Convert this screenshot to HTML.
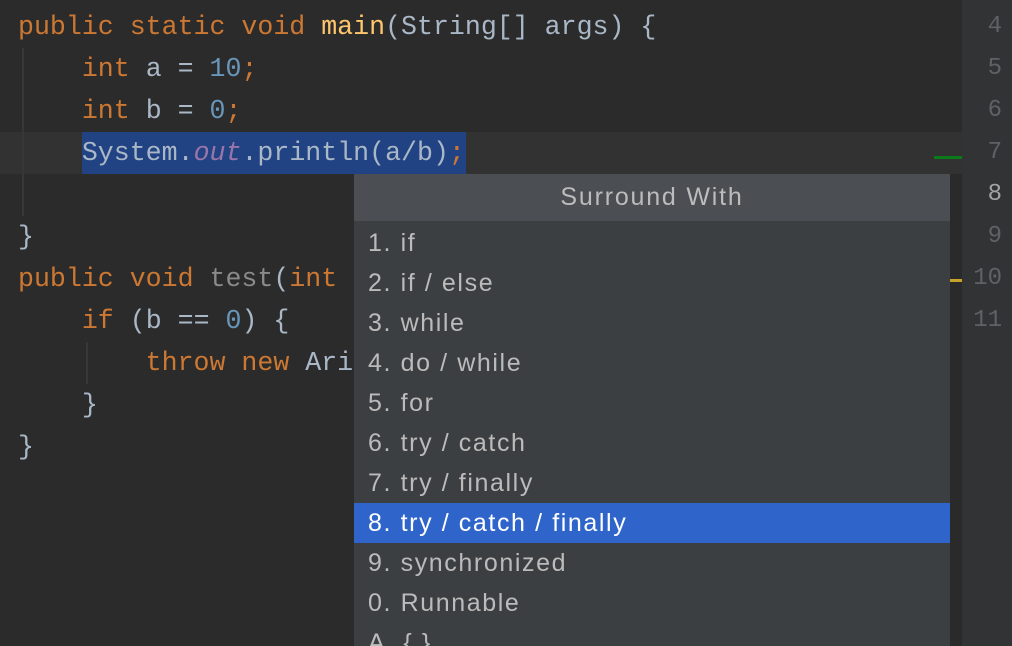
<!DOCTYPE html>
<html style="margin:0;width:1012px;height:646px;overflow:hidden"><head><style>
body{margin:0;width:1012px;height:646px;overflow:hidden;background:#2b2b2b;position:relative;font-family:"Liberation Mono",monospace}
.cur{position:absolute;left:0;top:132px;width:962px;height:42px;background:#323232}
.sel{position:absolute;left:82px;top:132px;width:384px;height:42px;background:#214283}
.gut{position:absolute;left:962px;top:0;width:50px;height:646px;background:#313335}
.ln{position:absolute;right:10px;width:40px;text-align:right;font-size:24px;color:#5f6265;line-height:42px}
.code{position:absolute;left:18px;font-size:26.6px;line-height:42px;color:#a9b7c6;white-space:pre}
.k{color:#cc7832}.n{color:#6897bb}.f{color:#ffc66d}.o{color:#9876aa;font-style:italic}.g{color:#8a8a8a}
.guide{position:absolute;width:2px;background:#373737}
.pop{position:absolute;left:354px;top:174px;width:596px;height:472px;overflow:hidden;background:#3c3f41;font-family:"Liberation Sans",sans-serif}
.hd{height:47px;background:#4b4e52;color:#bcbcbc;font-size:25px;letter-spacing:1.8px;line-height:47px;text-align:center}
.it{height:40px;line-height:40px;padding-left:14px;font-size:25px;letter-spacing:1.6px;color:#bbbbbb}
.it.s{background:#2f65ca;color:#fff}
</style></head><body>
<div class="cur"></div>
<div class="sel"></div>
<div class="guide" style="left:22px;top:48px;height:168px"></div>
<div class="guide" style="left:86px;top:342px;height:42px"></div>
<div class="code" style="top:6px"><span class="k">public static void </span><span class="f">main</span>(String[] args) {</div>
<div class="code" style="top:48px">    <span class="k">int </span>a = <span class="n">10</span><span class="k">;</span></div>
<div class="code" style="top:90px">    <span class="k">int </span>b = <span class="n">0</span><span class="k">;</span></div>
<div class="code" style="top:132px">    System.<span class="o">out</span>.println(a/b)<span class="k">;</span></div>
<div class="code" style="top:216px">}</div>
<div class="code" style="top:258px"><span class="k">public void </span><span class="g">test</span>(<span class="k">int </span></div>
<div class="code" style="top:300px">    <span class="k">if </span>(b == <span class="n">0</span>) {</div>
<div class="code" style="top:342px">        <span class="k">throw new </span>Ari</div>
<div class="code" style="top:384px">    }</div>
<div class="code" style="top:426px">}</div>
<div style="position:absolute;left:934px;top:156px;width:28px;height:3px;background:#0b7a1a"></div>
<div style="position:absolute;left:950px;top:174px;width:12px;height:472px;background:#2a2a2a"></div>
<div style="position:absolute;left:950px;top:279px;width:12px;height:3px;background:#c7a22a"></div>
<div class="gut">
<div class="ln" style="top:6px">4</div><div class="ln" style="top:48px">5</div><div class="ln" style="top:90px">6</div><div class="ln" style="top:132px">7</div><div class="ln" style="top:174px;color:#a4a3a3">8</div><div class="ln" style="top:216px">9</div><div class="ln" style="top:258px">10</div><div class="ln" style="top:300px">11</div>
</div>
<div class="pop">
<div class="hd">Surround With</div>
<div style="height:2px"></div>
<div class="it">1. if</div><div class="it">2. if / else</div><div class="it">3. while</div><div class="it">4. do / while</div><div class="it">5. for</div><div class="it">6. try / catch</div><div class="it">7. try / finally</div><div class="it s">8. try / catch / finally</div><div class="it">9. synchronized</div><div class="it">0. Runnable</div><div class="it">A. { }</div>
</div>
</body></html>
